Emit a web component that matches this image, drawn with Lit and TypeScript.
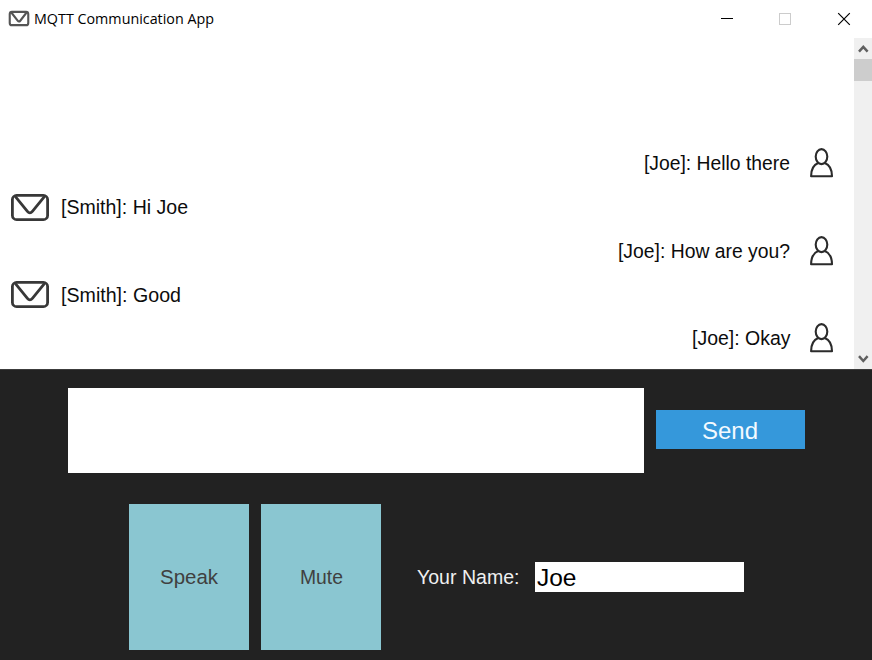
import { LitElement, html, svg, css } from "lit";
import { customElement } from "lit/decorators.js";

interface Message {
  from: string;
  text: string;
  own: boolean;
  width: number;
}

const messages: Message[] = [
  { from: "Joe", text: "Hello there", own: true, width: 146 },
  { from: "Smith", text: "Hi Joe", own: false, width: 127 },
  { from: "Joe", text: "How are you?", own: true, width: 172 },
  { from: "Smith", text: "Good", own: false, width: 120 },
  { from: "Joe", text: "Okay", own: true, width: 98.5 },
];

// One line of text set to an exact advance width.
const line = (text: string, width: number, height: number, baseline: number, cls: string) => html`
  <svg class=${cls} width=${width} height=${height}>
    ${svg`<text x="0" y=${baseline} textLength=${width} lengthAdjust="spacingAndGlyphs">${text}</text>`}
  </svg>`;

const envelope = (w: number, h: number, cls: string) => html`
  <svg class=${cls} width=${w} height=${h} viewBox="0 0 38 27" preserveAspectRatio="none">
    <rect x="1.4" y="1.4" width="35.2" height="24.2" rx="4.2" />
    <path d="M4.4 2.6 L16.4 17.4 Q18.9 20.4 21.4 17.4 L33.4 2.6" />
  </svg>`;

const person = html`
  <svg class="person" width="24" height="30" viewBox="0 0 24 30">
    <ellipse cx="11.5" cy="8.6" rx="5.8" ry="7.5" />
    <path d="M8.2 15 C3.2 17 1.1 21.5 1.1 28.3 H22 C22 21.5 19.8 17 14.8 15" />
  </svg>`;

@customElement("app-root")
export class AppRoot extends LitElement {
  static styles = css`
    :host {
      display: flex;
      flex-direction: column;
      width: 872px;
      height: 660px;
      overflow: hidden;
      background: #fff;
      font-family: "Liberation Sans", Arial, sans-serif;
      font-size: 20.5px;
      color: #111;
    }
    svg { display: block; flex: none; overflow: visible; }
    .titlebar { display: flex; height: 38px; padding-left: 9px; align-items: center; box-sizing: border-box; }
    .title { margin-left: 5px; font-family: "Open Sans", "Noto Sans", sans-serif; font-size: 15px; fill: #000; }
    .controls { display: flex; margin-left: auto; }
    .mail, .mail-small, .person { fill: none; stroke: #383838; stroke-width: 2.8; stroke-linejoin: round; }
    .mail-small { stroke: #555; stroke-width: 4; margin-top: -2px; }
    .person { stroke: #2b2b2b; stroke-width: 2.1; }
    .chat { display: flex; height: 331px; flex: none; }
    .list { flex: 1; display: flex; flex-direction: column; padding-top: 103.4px; box-sizing: border-box; }
    .row { display: flex; height: 43.75px; flex: none; align-items: center; padding: 0 20.5px 0 11px; gap: 12px; }
    .row.own { justify-content: flex-end; gap: 19.5px; }
    .label { fill: #0c0c0c; }
    .scroll { width: 18px; background: #f0f0f0; display: flex; flex-direction: column; }
    .thumb { height: 22px; background: #cdcdcd; }
    .arrow { fill: none; stroke: #606060; stroke-width: 2.5; }
    .down { margin-top: auto; }
    .panel { flex: 1; background: #222; border-top: 1px solid #3c3c3c; display: flex; flex-direction: column; }
    .compose { display: flex; align-items: center; gap: 12.4px; margin: 18px 0 0 67.5px; height: 85px; }
    .message { width: 576.5px; height: 85px; background: #fff; }
    .send { width: 149px; height: 39px; margin-top: -2px; background: #3598db; display: flex; align-items: center; justify-content: center; }
    .send-label { fill: #f4faff; font-size: 24px; margin-left: -2px; }
    .bottom { display: flex; align-items: center; margin: 31px 0 0 129px; height: 146px; }
    .tile { width: 120px; height: 146px; margin-right: 12.4px; background: #8ac6d1; display: flex; align-items: center; justify-content: center; }
    .tile-label { fill: #404040; }
    .name-label { fill: #f0f0f0; margin-left: 23px; }
    .field { width: 209px; height: 30px; margin-left: 15.5px; background: #fff; display: flex; align-items: center; padding-left: 2px; box-sizing: border-box; }
    .field-text { fill: #000; font-size: 24px; }
  `;

  render() {
    return html`
      <div class="titlebar">
        ${envelope(20, 15, "mail-small")}
        ${line("MQTT Communication App", 180, 20, 15, "title")}
        <svg class="controls" width="151" height="38" fill="none">
          <path d="M0 18.5H12" stroke="#000" />
          <rect x="58.5" y="13.5" width="11" height="11" stroke="#ccc" />
          <path d="M117.2 13.2 L128.8 24.8 M128.8 13.2 L117.2 24.8" stroke="#000" stroke-width="1.2" />
        </svg>
      </div>
      <div class="chat">
        <div class="list">
          ${messages.map((m) => {
            const label = line(`[${m.from}]: ${m.text}`, m.width, 24, 19.3, "label");
            return m.own
              ? html`<div class="row own">${label}${person}</div>`
              : html`<div class="row">${envelope(38, 27, "mail")}${label}</div>`;
          })}
        </div>
        <div class="scroll">
          <svg class="arrow" width="18" height="21"><path d="M5 13.6 L9.3 8.8 L13.6 13.6" /></svg>
          <div class="thumb"></div>
          <svg class="arrow down" width="18" height="21"><path d="M5 8.2 L9.3 13 L13.6 8.2" /></svg>
        </div>
      </div>
      <div class="panel">
        <div class="compose">
          <div class="message"></div>
          <div class="send">${line("Send", 56, 26, 21.5, "send-label")}</div>
        </div>
        <div class="bottom">
          <div class="tile">${line("Speak", 58, 24, 19, "tile-label")}</div>
          <div class="tile">${line("Mute", 43, 24, 19, "tile-label")}</div>
          ${line("Your Name:", 102.5, 24, 19, "name-label")}
          <div class="field">${line("Joe", 39.5, 26, 21.5, "field-text")}</div>
        </div>
      </div>
    `;
  }
}
